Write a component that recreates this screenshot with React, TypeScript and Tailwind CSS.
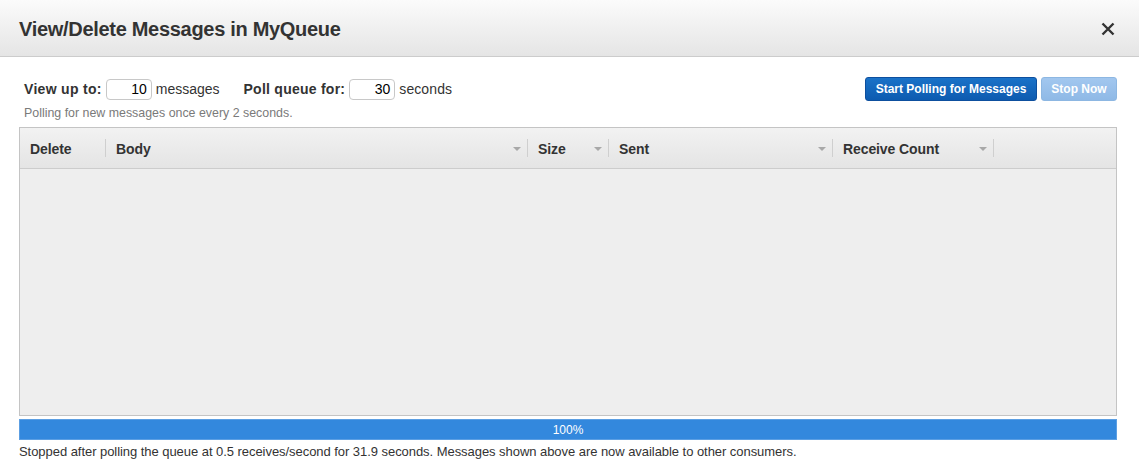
import React from "react";

const Arrow = () => (
  <svg width="8" height="5" viewBox="0 0 8 5" className="shrink-0">
    <path d="M0 0 L8 0 L4 4 Z" fill="#a8a8a8" />
  </svg>
);

const Col = ({ label, width, arrow = true }: { label: string; width: string; arrow?: boolean }) => (
  <div className={`flex items-center h-full ${width} shrink-0`}>
    <div className="flex-1 flex items-center pl-[10px] pr-[6px] pt-[2px]">
      <span className="flex-1 font-bold text-[14px] text-[#333] tracking-[-0.1px]">{label}</span>
      {arrow && <Arrow />}
    </div>
    <div className="w-px h-[18px] bg-[#cfcfcf] shrink-0" />
  </div>
);

export default function App() {
  return (
    <div className="w-[1139px] h-[465px] bg-white overflow-hidden" style={{ fontFamily: '"Liberation Sans", Arial, sans-serif' }}>
      <div className="h-[57px] border-b border-[#cccccc] bg-gradient-to-b from-[#fbfbfb] to-[#e5e5e5] flex items-center pl-[19px] pr-[24px]">
        <h1 className="flex-1 text-[20px] font-bold text-[#333] tracking-[-0.3px] mt-[1px]">View/Delete Messages in MyQueue</h1>
        <svg width="14" height="14" viewBox="0 0 14 14" className="mt-[2px]">
          <path d="M1.5 1.5 L12.5 12.5 M12.5 1.5 L1.5 12.5" stroke="#333" strokeWidth="2.4" />
        </svg>
      </div>
      <div className="ml-[19px] w-[1098px]">
        <div className="flex items-start pt-[21px]">
          <div className="flex-1 pl-[5px]">
            <div className="flex items-center h-[22px] text-[14px] text-[#333]">
              <span className="font-bold tracking-[0.3px]">View up to:</span>
              <div className="ml-[4px] w-[46px] h-[21px] border border-[#c8c8c8] rounded-[4px] text-right pr-[4px] leading-[19px] text-[14px] text-black">10</div>
              <span className="ml-[4px]">messages</span>
              <span className="font-bold ml-[24px] tracking-[0.25px]">Poll queue for:</span>
              <div className="ml-[4px] w-[46px] h-[21px] border border-[#c8c8c8] rounded-[4px] text-right pr-[4px] leading-[19px] text-[14px] text-black">30</div>
              <span className="ml-[4px] tracking-[0.1px]">seconds</span>
            </div>
            <div className="text-[12.4px] text-[#7a7a7a] mt-[6px] leading-[14px]">Polling for new messages once every 2 seconds.</div>
          </div>
          <div className="flex gap-[4px] mt-[-1px]">
            <div className="w-[172px] h-[24px] rounded-[3px] border border-[#0d4f9e] bg-gradient-to-b from-[#1a72c8] to-[#0d5bb0] text-white font-bold text-[12px] flex items-center justify-center">Start Polling for Messages</div>
            <div className="w-[76px] h-[24px] rounded-[3px] border border-[#8db7e2] bg-gradient-to-b from-[#a2c7ef] to-[#8fb9e6] text-white font-bold text-[12px] flex items-center justify-center">Stop Now</div>
          </div>
        </div>
        <div className="mt-[7px] w-[1098px] h-[289px] border border-[#c4c4c4] bg-[#eeeeee] flex flex-col">
          <div className="h-[41px] border-b border-[#cccccc] bg-gradient-to-b from-[#f2f2f2] to-[#e4e4e4] flex items-center">
            <Col label="Delete" width="w-[86px]" arrow={false} />
            <Col label="Body" width="w-[422px]" />
            <Col label="Size" width="w-[81px]" />
            <Col label="Sent" width="w-[224px]" />
            <Col label="Receive Count" width="w-[161px]" />
          </div>
          <div className="flex-1" />
        </div>
        <div className="mt-[3px] w-[1098px] h-[21px] bg-[#3388dd] border border-[#5c9fe3] text-white text-[12px] flex items-center justify-center">100%</div>
        <div className="text-[13px] text-[#333] mt-[4px] leading-[15px] tracking-[-0.05px]">Stopped after polling the queue at 0.5 receives/second for 31.9 seconds. Messages shown above are now available to other consumers.</div>
      </div>
    </div>
  );
}
